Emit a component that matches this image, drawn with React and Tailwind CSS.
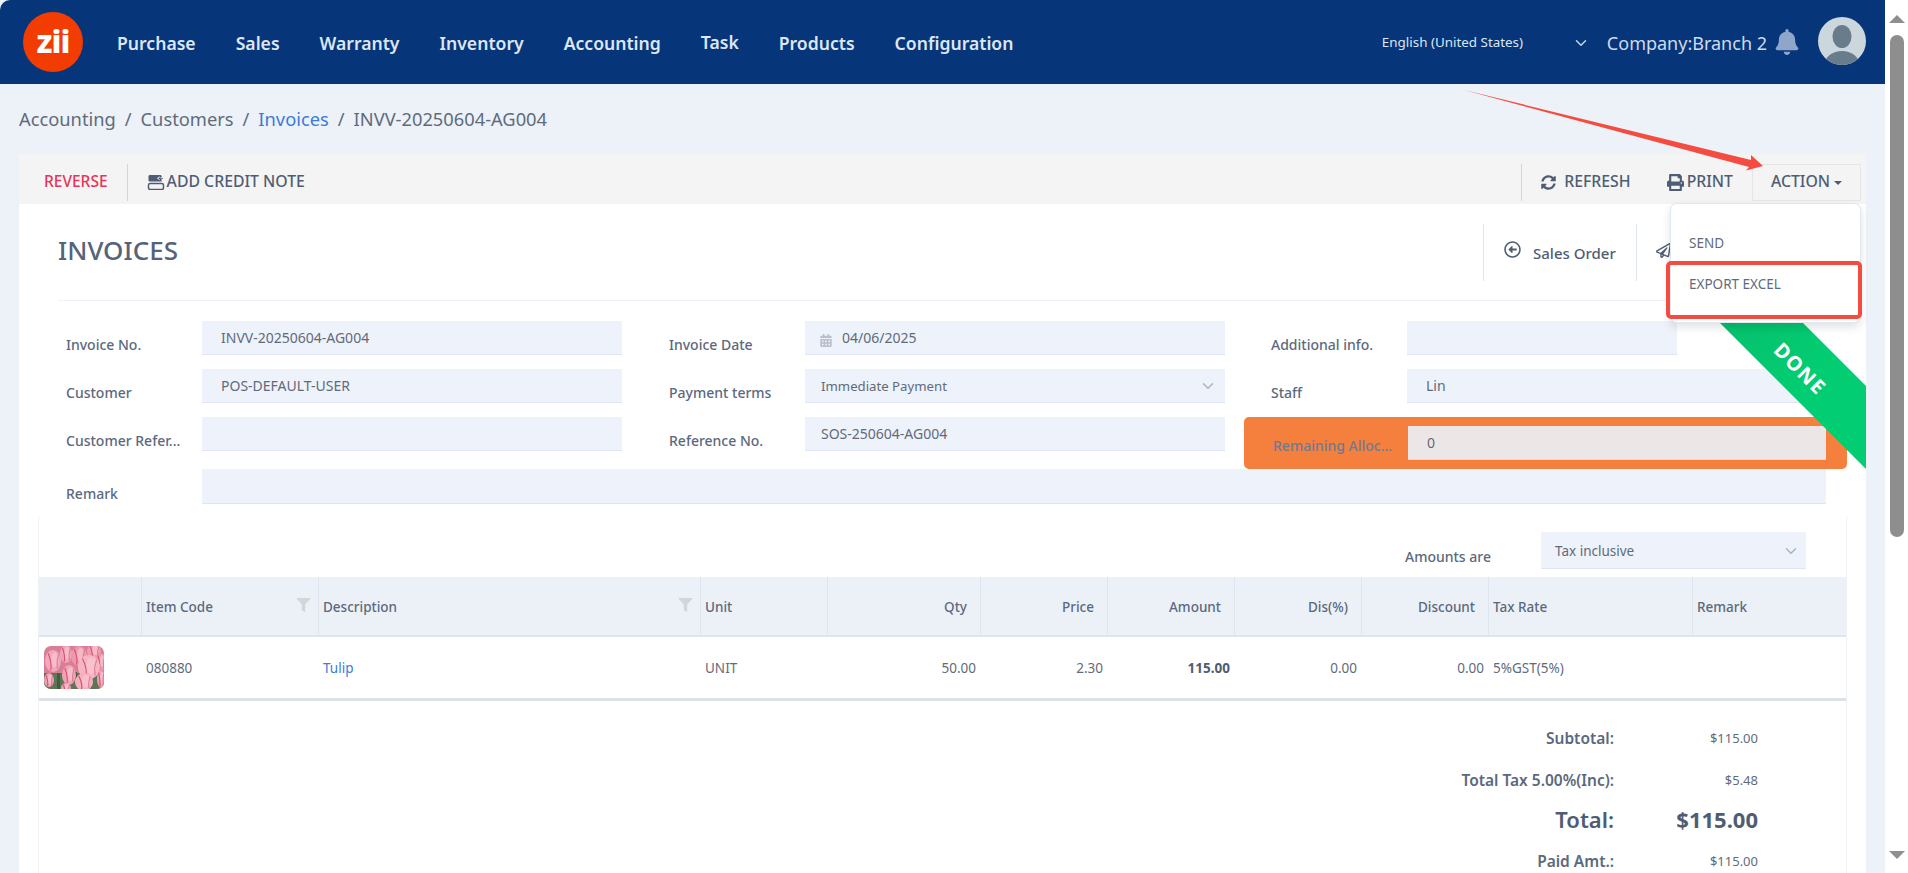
import React from "react";
import { ChevronDown } from "lucide-react";
import { FaBell, FaSyncAlt, FaPrint, FaRegArrowAltCircleLeft, FaRegPaperPlane, FaCalendarAlt, FaFilter } from "react-icons/fa";

const NAV = ["Purchase", "Sales", "Warranty", "Inventory", "Accounting", "Task", "Products", "Configuration"];

const COLS = "grid grid-cols-[102px_177px_382px_127px_153px_127px_127px_127px_127px_204px_154px]";

function Label({ children, className = "" }) {
  return <span className={"w-[136px] shrink-0 truncate pr-2 text-[14px] leading-5 font-medium text-[#5b697e] " + className}>{children}</span>;
}

function Input({ children, className = "" }) {
  return (
    <div className={"flex h-[34px] items-center border-b border-[#dfe6f1] bg-[#eef2fa] text-[14px] text-[#5f6b7c] " + className}>
      {children}
    </div>
  );
}

function Field({ label, children, inputClass = "w-[420px] pl-[19px]" }) {
  return (
    <div className="flex items-start">
      <div className="flex h-[34px] items-end">
        <Label>{label}</Label>
      </div>
      <Input className={inputClass}>{children}</Input>
    </div>
  );
}

function Tulips() {
  const flowers = [
    [50, 5, 7, 7, "#ee9db1"], [22, 8, 6, 9, "#f0a6b8"], [35, 10, 8, 10, "#ec98ae"], [9, 15, 8, 11, "#f2a8ba"],
    [57, 16, 5, 9, "#ec94ab"], [45, 21, 11, 12, "#f5b5c2"], [5, 34, 5, 7, "#ee9fb2"], [25, 29, 7, 10, "#f2a2b5"],
    [57, 33, 4, 9, "#ef9db1"], [40, 36, 9, 9, "#f5b0bf"], [22, 42, 5, 5, "#ef9fb3"],
  ];
  return (
    <svg viewBox="0 0 60 43" className="h-[43px] w-[60px] rounded-[7px]">
      <rect width="60" height="43" fill="#d77f97" />
      <rect y="27" width="60" height="16" fill="#5c7656" />
      <rect x="13" y="27" width="3" height="16" fill="#3f5f40" />
      <rect x="31" y="26" width="2" height="8" fill="#3f5f40" />
      {flowers.map(([x, y, rx, ry, c], i) => (
        <g key={i}>
          <ellipse cx={x} cy={y} rx={rx} ry={ry} fill={c} />
          <ellipse cx={x + rx * 0.2} cy={y - ry * 0.1} rx={rx * 0.45} ry={ry * 0.7} fill="#f8c8d1" opacity="0.7" />
          <path d={`M${x - rx * 0.6} ${y - ry * 0.7} Q${x - rx * 0.1} ${y + ry * 0.2} ${x - rx * 0.3} ${y + ry * 0.85}`} stroke="#d9506f" strokeWidth="1.1" fill="none" />
          <path d={`M${x + rx * 0.7} ${y - ry * 0.6} Q${x + rx * 0.4} ${y} ${x + rx * 0.55} ${y + ry * 0.7}`} stroke="#e0698a" strokeWidth="0.9" fill="none" />
        </g>
      ))}
    </svg>
  );
}

function CreditIcon() {
  return (
    <svg viewBox="0 0 18 16" className="h-[15px] w-[18px]" fill="#4f5d73">
      <path d="M1 1.5C1 .7 1.7 0 2.5 0h11c.8 0 1.5.7 1.5 1.5V7H2.5C1.7 7 1 6.3 1 5.5z" />
      <path d="M10 3.5l3-2.2v1.4h4v1.6h-4v1.4z" fill="#f4f4f4" />
      <path d="M11.5 3.5l2-1.4v1h3v1h-3v.9z" />
      <rect x="1" y="9" width="16" height="6.5" rx="1.8" fill="none" stroke="#4f5d73" strokeWidth="1.6" />
    </svg>
  );
}

function Avatar() {
  return (
    <svg viewBox="0 0 48 48" className="h-[48px] w-[48px]">
      <defs>
        <clipPath id="avatar-clip"><circle cx="24" cy="24" r="24" /></clipPath>
      </defs>
      <circle cx="24" cy="24" r="24" fill="#cbd6dd" />
      <g clipPath="url(#avatar-clip)" fill="#697c8c">
        <ellipse cx="24" cy="19.5" rx="9.5" ry="11.5" />
        <ellipse cx="24" cy="47" rx="17" ry="13" />
      </g>
    </svg>
  );
}

function HeadCell({ children, right = false, funnel = false, edge = true }) {
  return (
    <div className={"flex h-full items-center pt-[2px] text-[13.5px] font-medium text-[#5b697e] " + (edge ? "border-l border-[#dfe5ef] " : "") + (right ? "justify-end pr-[13px]" : "pl-[4px]")}>
      <span>{children}</span>
      {funnel && <FaFilter className="mb-[4px] ml-auto mr-[7px] h-[14px] w-[15px] text-[#d3d6d9]" />}
    </div>
  );
}

function Cell({ children, right = false, bold = false, blue = false }) {
  return (
    <div className={"flex h-full items-center pt-[2px] text-[13.5px] " + (right ? "justify-end pr-[4px] " : "pl-[5px] ") + (bold ? "font-bold text-[#4f5d73] " : "") + (blue ? "text-[#3a7bdc]" : bold ? "" : "text-[#5f6b7c]")}>
      {children}
    </div>
  );
}

function Total({ label, value, h = "h-[42px]", big = false, className = "" }) {
  return (
    <div className={"flex items-center justify-end " + h + " " + className}>
      <span className={big ? "text-[22px] font-semibold text-[#4f5d73]" : "text-[15.5px] font-semibold text-[#5b697e]"}>{label}</span>
      <span className={"w-[144px] text-right " + (big ? "text-[22px] font-bold text-[#4f5d73]" : "text-[13px] text-[#5f6b7c]")}>{value}</span>
    </div>
  );
}

export default function App() {
  return (
    <div className="relative flex h-[873px] w-[1908px] overflow-hidden bg-white font-['Noto_Sans',sans-serif]">
      <div className="flex h-full w-[1885px] shrink-0 flex-col overflow-hidden bg-[#edf1f8]">
        <header className="flex h-[84px] shrink-0 items-center rounded-tl-[10px] bg-[#06357a] pl-[23px] pr-[19px]">
          <div className="flex h-[60px] w-[60px] shrink-0 items-center justify-center rounded-full bg-[#f23c02]">
            <span className="mb-[3px] text-[32px] leading-none font-extrabold tracking-[-1px] text-white">zii</span>
          </div>
          <nav className="ml-[34px] mt-[2px] flex items-center gap-[40px]">
            {NAV.map((n) => (
              <span key={n} className={"text-[17.6px] font-semibold text-[#dde6f3] " + (n === "Task" ? "mb-[2px]" : "")}>{n}</span>
            ))}
          </nav>
          <div className="ml-auto flex items-center">
            <span className="mt-[1px] w-[190px] text-[13.4px] text-[#dde6f3]">English (United States)</span>
            <ChevronDown className="mt-[1px] h-[18px] w-[18px] text-[#c9d5e6]" strokeWidth={2} />
            <span className="ml-[17px] mt-[2px] text-[18px] text-[#cfdbea]">Company:Branch 2</span>
            <FaBell className="ml-[8px] h-[26px] w-[24px] text-[#8fa5c9]" />
            <div className="ml-[19px] mb-[3px]"><Avatar /></div>
          </div>
        </header>

        <div className="flex h-[70px] shrink-0 items-center pl-[19px] text-[18.3px] text-[#5f6b7c]">
          <span>Accounting</span>
          <span className="mx-[9px]">/</span>
          <span>Customers</span>
          <span className="mx-[9px]">/</span>
          <span className="text-[#3a7bdc]">Invoices</span>
          <span className="mx-[9px]">/</span>
          <span>INVV-20250604-AG004</span>
        </div>

        <div className="ml-[19px] w-[1847px] grow bg-white">
          <div className="flex h-[50px] items-center bg-[#f4f4f4] pl-[25px] pr-[5px] pt-[6px]">
            <span className="text-[15.5px] font-medium text-[#e8345a]">REVERSE</span>
            <div className="ml-[19px] h-[37px] w-px bg-[#cfd6e0]" />
            <div className="ml-[19px] flex items-center gap-[2px] text-[15.8px] font-medium text-[#4f5d73]">
              <CreditIcon />
              <span>ADD CREDIT NOTE</span>
            </div>
            <div className="ml-auto h-[37px] w-px bg-[#cfd6e0]" />
            <div className="ml-[19px] flex items-center gap-[8px] text-[15.8px] font-medium text-[#4f5d73]">
              <FaSyncAlt className="h-[15px] w-[15px]" />
              <span>REFRESH</span>
            </div>
            <div className="ml-[36px] flex items-center gap-[3px] text-[15.8px] font-medium text-[#4f5d73]">
              <FaPrint className="h-[17px] w-[17px]" />
              <span>PRINT</span>
            </div>
            <div className="ml-[19px] flex h-[37px] w-[109px] items-center justify-center gap-[4px] border border-[#e6e6e6] text-[15.8px] font-medium text-[#4f5d73]">
              <span>ACTION</span>
              <span className="mt-[1px] h-0 w-0 border-x-[4px] border-t-[4px] border-x-transparent border-t-[#4f5d73]" />
            </div>
          </div>

          <div className="mx-[39px] flex h-[97px] items-start justify-between border-b border-[#edf1f8] pt-[20px]">
            <h1 className="mt-[8px] text-[26px] leading-[36px] font-medium text-[#56637a]">INVOICES</h1>
            <div className="mr-[151px] flex h-[57px] items-center text-[#4f5d73]">
              <div className="flex h-full w-[153px] items-center border-l border-[#dfe6f1] pl-[20px] text-[15px] font-medium">
                <FaRegArrowAltCircleLeft className="mb-[6px] h-[17px] w-[17px]" />
                <span className="ml-[12px] mt-[1px]">Sales Order</span>
              </div>
              <div className="flex h-full w-[40px] items-center border-l border-[#dfe6f1] pl-[19px]">
                <FaRegPaperPlane className="mb-[4px] h-[15px] w-[15px] shrink-0" />
              </div>
            </div>
          </div>

          <div className="mt-[20px] grid grid-cols-[603px_602px_1fr] gap-y-[14px] pl-[47px]">
            <Field label="Invoice No.">INVV-20250604-AG004</Field>
            <Field label="Invoice Date" inputClass="w-[420px] pl-[15px]">
              <FaCalendarAlt className="mr-[10px] mt-[6px] h-[13px] w-[12px] text-[#b9bfcb]" />
              04/06/2025
            </Field>
            <Field label="Additional info." inputClass="w-[270px]" />
            <Field label="Customer">POS-DEFAULT-USER</Field>
            <Field label="Payment terms" inputClass="w-[420px] pl-[16px]">
              <span className="mt-[2px] text-[13.2px]">Immediate Payment</span>
              <ChevronDown className="ml-auto mr-[8px] h-[18px] w-[18px] text-[#aab4c2]" />
            </Field>
            <Field label="Staff" inputClass="w-[418px] pl-[19px]">Lin</Field>
            <div className="h-[52px]">
              <Field label="Customer Refer..." />
            </div>
            <div className="h-[52px]">
              <Field label="Reference No." inputClass="w-[420px] pl-[16px]">SOS-250604-AG004</Field>
            </div>
            <div className="ml-[-27px] flex h-[52px] w-[603px] items-center rounded-[5px] bg-[#f5803e] pl-[29px]">
              <span className="mt-[4px] w-[135px] shrink-0 truncate text-[14px] font-medium text-[#6f7b8e]">Remaining Alloc...</span>
              <div className="flex h-[34px] w-[418px] items-center border-b border-[#e0dada] bg-[#ede6e6] pl-[19px] text-[14px] text-[#5f6b7c]">0</div>
            </div>
          </div>

          <div className="-mt-[14px] pl-[47px]">
            <div className="mt-[14px] flex items-start">
              <div className="flex h-[35px] items-end"><Label>Remark</Label></div>
              <div className="h-[35px] w-[1624px] border-b border-[#dfe6f1] bg-[#eef2fa]" />
            </div>
          </div>

          <div className="ml-[19px] mt-[13px] w-[1809px] border-x border-[#eef1f6]">
            <div className="flex h-[60px] items-start justify-end pr-[40px] pt-[15px]">
              <span className="mt-[14px] text-[14px] font-medium text-[#5b697e]">Amounts are</span>
              <div className="ml-[50px] flex h-[37px] w-[265px] items-center border-b border-[#dfe6f1] bg-[#eef2fa] pl-[14px] pt-[2px] text-[13.5px] text-[#5f6b7c]">
                Tax inclusive
                <ChevronDown className="ml-auto mr-[6px] h-[18px] w-[18px] text-[#aab4c2]" />
              </div>
            </div>
            <div className={COLS + " h-[60px] border-b-2 border-[#dfe5ef] bg-[#ecf1f8]"}>
              <HeadCell edge={false} />
              <HeadCell funnel>Item Code</HeadCell>
              <HeadCell funnel>Description</HeadCell>
              <HeadCell>Unit</HeadCell>
              <HeadCell right>Qty</HeadCell>
              <HeadCell right>Price</HeadCell>
              <HeadCell right>Amount</HeadCell>
              <HeadCell right>Dis(%)</HeadCell>
              <HeadCell right>Discount</HeadCell>
              <HeadCell>Tax Rate</HeadCell>
              <HeadCell>Remark</HeadCell>
            </div>
            <div className={COLS + " h-[64px] border-b-[3px] border-[#dbe2ea]"}>
              <div className="flex h-full items-center pb-[1px] pl-[5px]"><Tulips /></div>
              <Cell>080880</Cell>
              <Cell blue>Tulip</Cell>
              <Cell>UNIT</Cell>
              <Cell right>50.00</Cell>
              <Cell right>2.30</Cell>
              <Cell right bold>115.00</Cell>
              <Cell right>0.00</Cell>
              <Cell right>0.00</Cell>
              <Cell>5%GST(5%)</Cell>
              <Cell />
            </div>
            <div className="mt-[17px] pr-[88px]">
              <Total label="Subtotal:" value="$115.00" />
              <Total label="Total Tax 5.00%(Inc):" value="$5.48" />
              <Total label="Total:" value="$115.00" h="h-[38px]" big className="pb-[4px]" />
              <Total label="Paid Amt.:" value="$115.00" className="pt-[2px]" />
            </div>
          </div>
        </div>
      </div>

      <div className="flex h-full w-[23px] shrink-0 flex-col items-center">
        <div className="mt-[15px] h-0 w-0 border-x-[8px] border-b-[8px] border-x-transparent border-b-[#8f8f8f]" />
        <div className="mt-[12px] h-[502px] w-[14px] rounded-full bg-[#8e8e8e]" />
        <div className="mt-[314px] h-0 w-0 border-x-[8px] border-t-[8px] border-x-transparent border-t-[#8f8f8f]" />
      </div>

      {/* DONE ribbon lying across the card corner */}
      <svg className="absolute left-[1720px] top-[323px] h-[146px] w-[146px]" viewBox="0 0 146 146">
        <defs>
          <linearGradient id="ribbon" x1="0" y1="0" x2="1" y2="1">
            <stop offset="0" stopColor="#07bf6c" />
            <stop offset="0.5" stopColor="#02cd73" />
          </linearGradient>
        </defs>
        <polygon points="0,0 83,0 146,63 146,146" fill="url(#ribbon)" />
      </svg>
      <span className="absolute left-[1760px] top-[354px] w-[80px] rotate-45 text-center text-[20px] leading-[30px] font-bold tracking-[1.5px] text-white">DONE</span>

      {/* open ACTION menu */}
      <div className="absolute left-[1670px] top-[203px] h-[120px] w-[191px] rounded-[7px] border border-[#dfe7f3] bg-white pl-[18px] text-[13.5px] text-[#5f6b7c] shadow-[0_4px_10px_rgba(0,0,0,0.12)]">
        <div className="mt-[29px] leading-5">SEND</div>
        <div className="mt-[21px] leading-5">EXPORT EXCEL</div>
      </div>

      {/* annotations drawn on the screenshot */}
      <div className="absolute left-[1666px] top-[261px] h-[58px] w-[196px] rounded-[5px] border-[4px] border-[#f44c40]" />
      <svg className="pointer-events-none absolute left-[1460px] top-[85px] h-[90px] w-[310px]" viewBox="1460 85 310 90">
        <polygon points="1464,90 1751,160 1751,155 1763,166 1746,170.5 1749,167" fill="#f44c40" />
      </svg>
    </div>
  );
}
